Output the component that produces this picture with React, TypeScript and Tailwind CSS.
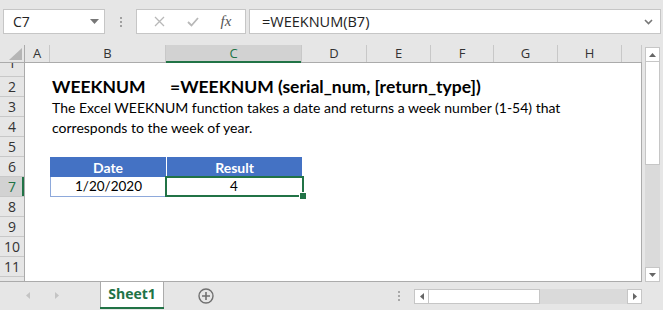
import React from "react";

const cols = [
  { l: "A", w: 25 },
  { l: "B", w: 116 },
  { l: "C", w: 136 },
  { l: "D", w: 65 },
  { l: "E", w: 64 },
  { l: "F", w: 63 },
  { l: "G", w: 64 },
  { l: "H", w: 64 },
  { l: "", w: 20 },
];

function RowHead({ n, h, sel, cut }: { n: string; h: number; sel?: boolean; cut?: boolean }) {
  return (
    <div
      className={
        "relative shrink-0 flex justify-center overflow-hidden border-b border-[#c8c8c8] box-border " +
        (sel ? "bg-[#d2d2d2] text-[#217346] " : "text-[#333] ") +
        (cut ? "items-start" : "items-center")
      }
      style={{ height: h }}
    >
      <span className={"text-[14px] leading-[20px] " + (cut ? "-mt-[10px]" : "")}>{n}</span>
      {sel && <div className="absolute right-0 top-0 bottom-0 w-[2px] bg-[#217346]" />}
    </div>
  );
}

export default function App() {
  const cell = "font-['Lato',sans-serif]";
  return (
    <div className="w-[663px] h-[310px] bg-[#e6e6e6] overflow-hidden flex flex-col font-['Open_Sans',sans-serif] text-[#222]">
      {/* formula bar */}
      <div className="h-[45px] shrink-0 flex items-start pt-[9px] pl-[3px]">
        <div className="w-[102px] h-[25px] bg-white border border-[#c6c6c6] flex items-center justify-between pl-[9px] pr-[5px]">
          <span className="text-[14px] text-[#222]">C7</span>
          <svg width="9" height="5" viewBox="0 0 9 5"><path d="M0 0h9L4.5 5z" fill="#777" /></svg>
        </div>
        <div className="w-[31px] h-[25px] flex flex-col items-center justify-center gap-[2px]">
          <div className="w-[2px] h-[2px] bg-[#a0a0a0]" />
          <div className="w-[2px] h-[2px] bg-[#a0a0a0]" />
          <div className="w-[2px] h-[2px] bg-[#a0a0a0]" />
        </div>
        <div className="w-[110px] h-[25px] bg-white border border-[#c6c6c6] flex items-center">
          <div className="w-[40px] flex justify-center pl-[4px]">
            <svg width="11" height="11" viewBox="0 0 11 11"><path d="M1 1l9 9M10 1l-9 9" stroke="#b8b8b8" strokeWidth="1.3" /></svg>
          </div>
          <div className="w-[32px] flex justify-center">
            <svg width="12" height="10" viewBox="0 0 12 10"><path d="M1 5l3.5 3.5L11 1" stroke="#b8b8b8" strokeWidth="1.8" fill="none" /></svg>
          </div>
          <div className="w-[34px] flex justify-center">
            <span className="font-['Liberation_Serif',serif] italic text-[15px] text-[#555] leading-none">fx</span>
          </div>
        </div>
        <div className="ml-[3px] w-[412px] h-[25px] bg-white border border-[#c6c6c6] flex items-center justify-between pl-[12px] pr-[7px]">
          <span className="text-[14.5px] text-[#222]">=WEEKNUM(B7)</span>
          <svg width="9" height="6" viewBox="0 0 9 6"><path d="M1 1l3.5 3.5L8 1" stroke="#777" strokeWidth="1.6" fill="none" /></svg>
        </div>
      </div>

      {/* grid section */}
      <div className="h-[237px] shrink-0 flex">
        <div className="w-[642px] h-full flex flex-col border-r border-b border-[#ababab] box-border bg-white">
          {/* column headers */}
          <div className="h-[18px] shrink-0 flex bg-[#e6e6e6] border-b border-[#ababab] box-border">
            <div className="w-[25px] shrink-0 h-full relative border-r border-[#ababab] box-border">
              <svg className="absolute left-[9px] top-[3px]" width="13" height="12" viewBox="0 0 13 12"><path d="M13 0v12H0z" fill="#b5b5b5" /></svg>
            </div>
            {cols.map((c) => (
              <div
                key={c.l + c.w}
                className={
                  "relative shrink-0 h-full flex items-center justify-center border-r border-[#c8c8c8] box-border text-[13px] " +
                  (c.l === "C" ? "bg-[#d2d2d2] text-[#217346]" : "text-[#333]")
                }
                style={{ width: c.w }}
              >
                {c.l}
                {c.l === "C" && <div className="absolute left-0 right-0 bottom-[-1px] h-[2px] bg-[#217346]" />}
              </div>
            ))}
          </div>
          {/* body */}
          <div className="flex-1 min-h-0 flex overflow-hidden">
            <div className="w-[25px] shrink-0 bg-[#e6e6e6] border-r border-[#ababab] box-border flex flex-col">
              <RowHead n="1" h={14} cut />
              {["2", "3", "4", "5", "6"].map((n) => (
                <RowHead key={n} n={n} h={20} />
              ))}
              <RowHead n="7" h={20} sel />
              {["8", "9", "10", "11"].map((n) => (
                <RowHead key={n} n={n} h={20} />
              ))}
              <RowHead n="" h={20} />
            </div>
            <div className={"flex-1 flex flex-col text-[#000] " + cell}>
              <div className="h-[14px] shrink-0" />
              <div className="h-[20px] shrink-0 flex items-center font-bold text-[17.5px] whitespace-nowrap">
                <div className="w-[141px] shrink-0 pl-[27px]">WEEKNUM</div>
                <div className="shrink-0 pl-[4px]">=WEEKNUM (serial_num, [return_type])</div>
              </div>
              <div className="h-[20px] shrink-0 flex items-center pl-[27px] text-[14px] whitespace-nowrap">
                The Excel WEEKNUM function takes a date and returns a week number (1-54) that
              </div>
              <div className="h-[20px] shrink-0 flex items-center pl-[27px] text-[14px] whitespace-nowrap">
                corresponds to the week of year.
              </div>
              <div className="h-[20px] shrink-0" />
              <div className="h-[20px] shrink-0 flex pl-[25px] text-[14px]">
                <div className="w-[116px] shrink-0 h-full bg-[#4472c4] text-white font-bold flex items-center justify-center">Date</div>
                <div className="w-[136px] shrink-0 h-full bg-[#4472c4] text-white font-bold flex items-center justify-center border-l border-white">Result</div>
              </div>
              <div className="h-[20px] shrink-0 flex pl-[25px] text-[13.5px] relative">
                <div className="w-[116px] shrink-0 h-full border-l border-b border-[#8ea9db] box-border flex items-center justify-center">1/20/2020</div>
                <div className="w-[136px] shrink-0 h-full border-b border-[#8ea9db] box-border flex items-center justify-center">4</div>
                <div className="absolute left-[140px] top-[-1px] w-[139px] h-[21px] border-2 border-[#217346] box-border" />
                <div className="absolute left-[275px] top-[16px] w-[6px] h-[6px] bg-[#217346] border border-white box-content -m-[1px]" />
              </div>
            </div>
          </div>
        </div>
        {/* vertical scrollbar */}
        <div className="w-[21px] h-full flex flex-col pl-[3px] pr-[3px] pt-[2px]">
          <div className="h-[15px] shrink-0 bg-white border border-[#c6c6c6] flex items-center justify-center">
            <svg width="7" height="4" viewBox="0 0 7 4"><path d="M0 4h7L3.5 0z" fill="#666" /></svg>
          </div>
          <div className="h-[103px] shrink-0 bg-white border-x border-b border-[#c6c6c6]" />
          <div className="flex-1 bg-[#dadada]" />
          <div className="h-[15px] shrink-0 bg-white border border-[#c6c6c6] flex items-center justify-center">
            <svg width="7" height="4" viewBox="0 0 7 4"><path d="M0 0h7L3.5 4z" fill="#666" /></svg>
          </div>
        </div>
      </div>

      {/* sheet tabs */}
      <div className="flex-1 flex items-start">
        <div className="w-[100px] shrink-0 h-[27px] flex items-center">
          <svg className="ml-[26px]" width="4" height="7" viewBox="0 0 4 7"><path d="M4 0v7L0 3.5z" fill="#c4c4c4" /></svg>
          <svg className="ml-[25px]" width="4" height="7" viewBox="0 0 4 7"><path d="M0 0v7l4-3.5z" fill="#c4c4c4" /></svg>
        </div>
        <div className="w-[64px] shrink-0 h-[25px] bg-white border-x border-[#ababab] box-border relative flex items-center justify-center">
          <span className="text-[14px] font-bold text-[#217346] -mt-[2px]">Sheet1</span>
          <div className="absolute left-[-1px] right-[-1px] bottom-[-2px] h-[2px] bg-[#217346]" />
        </div>
        <div className="w-[82px] shrink-0 h-[27px] flex items-center justify-center pl-[1px]">
          <svg width="16" height="16" viewBox="0 0 16 16">
            <circle cx="8" cy="8" r="7" stroke="#707070" strokeWidth="1.4" fill="none" />
            <path d="M8 4v8M4 8h8" stroke="#707070" strokeWidth="1.6" />
          </svg>
        </div>
        <div className="w-[154px] shrink-0 h-[27px] flex flex-col items-end justify-center gap-[2px]">
          <div className="w-[2px] h-[2px] bg-[#a8a8a8]" />
          <div className="w-[2px] h-[2px] bg-[#a8a8a8]" />
          <div className="w-[2px] h-[2px] bg-[#a8a8a8]" />
        </div>
        <div className="ml-[14px] mt-[7px] w-[228px] shrink-0 h-[15px] flex">
          <div className="w-[15px] shrink-0 h-full bg-white border border-[#c6c6c6] flex items-center justify-center">
            <svg width="4" height="7" viewBox="0 0 4 7"><path d="M4 0v7L0 3.5z" fill="#666" /></svg>
          </div>
          <div className="w-[111px] shrink-0 h-full bg-white border-y border-r border-[#c6c6c6]" />
          <div className="flex-1 h-full bg-[#dadada]" />
          <div className="w-[15px] shrink-0 h-full bg-white border border-[#c6c6c6] flex items-center justify-center">
            <svg width="4" height="7" viewBox="0 0 4 7"><path d="M0 0v7l4-3.5z" fill="#666" /></svg>
          </div>
        </div>
      </div>
    </div>
  );
}
